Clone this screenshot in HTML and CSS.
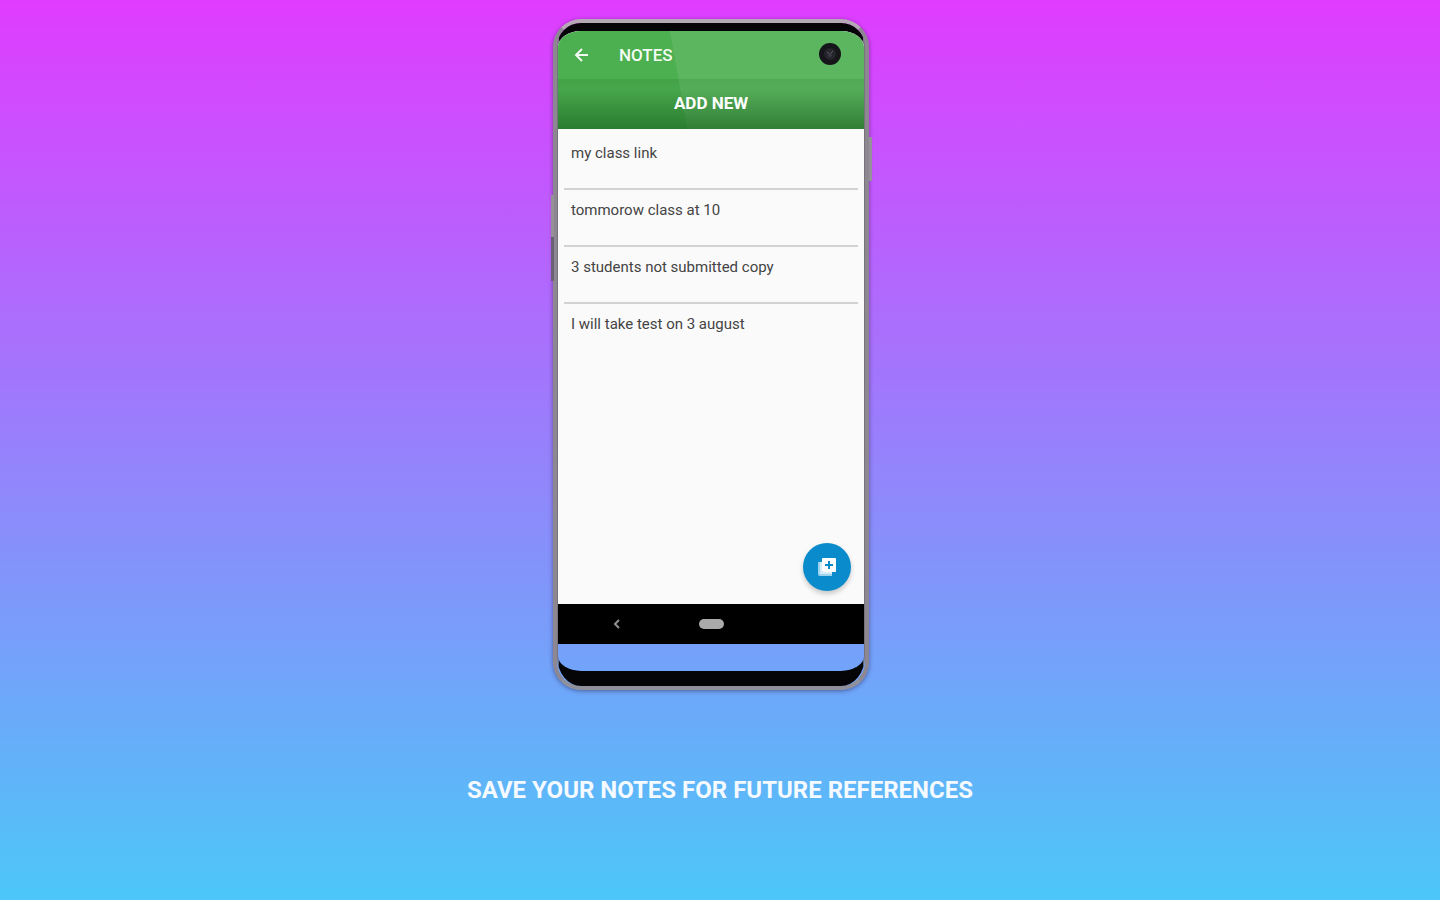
FILE: index.html
```
<!DOCTYPE html>
<html lang="en">
<head>
    <meta charset="UTF-8">
    <meta name="viewport" content="width=device-width, initial-scale=1.0">
    <title>Notes</title>
    <link rel="stylesheet" href="styles.css">
</head>
<body>
    <main class="promo">
        <div class="phone">
            <span class="side-key key-power"></span>
            <span class="side-key key-volume"></span>
            <span class="side-key key-assist"></span>
            <div class="bezel">
                <!-- App -->
                <div class="app">
                    <header class="app-header">
                        <div class="app-bar">
                            <button type="button" class="back-button" aria-label="Back">
                                <svg width="16" height="16" viewBox="0 0 16 16" fill="none" stroke="#f0faf0" stroke-width="2">
                                    <path d="M14 8H2M8 2L2 8l6 6"/>
                                </svg>
                            </button>
                            <h1>NOTES</h1>
                            <svg class="camera" width="24" height="26" viewBox="0 0 24 26">
                                <circle cx="12" cy="12" r="11" fill="#15151a"/>
                                <circle cx="12" cy="12" r="6" fill="#25252b"/>
                                <path d="M9 10l3 2 3-3" fill="none" stroke="#5c5c66" stroke-width="1"/>
                                <circle cx="12" cy="13" r="2" fill="#3b3b45"/>
                            </svg>
                        </div>
                        <button type="button" class="add-button">ADD NEW</button>
                    </header>
                    <ul class="note-list">
                        <li>my class link</li>
                        <li>tommorow class at 10</li>
                        <li>3 students not submitted copy</li>
                        <li>I will take test on 3 august</li>
                    </ul>
                    <button type="button" class="fab" aria-label="Add note">
                        <svg width="20" height="20" viewBox="0 0 20 20">
                            <path d="M1 5v12a2 2 0 0 0 2 2h12v-2H3V5z" fill="#9fd2ec"/>
                            <path d="M3 5v12h12v-2H5V5z" fill="#d5edf8"/>
                            <rect x="5" y="1" width="14" height="14" rx="1" fill="#fff"/>
                            <path d="M12 4v8M8 8h8" stroke="#0a8bcb" stroke-width="2"/>
                        </svg>
                    </button>
                </div>
                <!-- System navigation -->
                <nav class="nav-bar">
                    <button type="button" class="nav-back" aria-label="System back">
                        <svg width="8" height="10" viewBox="0 0 8 10" fill="none" stroke="#909090" stroke-width="2">
                            <path d="M6 1L2 5l4 4"/>
                        </svg>
                    </button>
                    <button type="button" class="nav-home" aria-label="Home"></button>
                </nav>
            </div>
        </div>
        <h2 class="caption">SAVE YOUR NOTES FOR FUTURE REFERENCES</h2>
    </main>
</body>
</html>
```
FILE: styles.css
```
* {
    margin: 0;
    padding: 0;
    box-sizing: border-box;
}

body {
    font-family: Roboto, Arial, sans-serif;
    min-height: 100vh;
    background: linear-gradient(#e03cff, #4cc7f8);
}

button {
    border: none;
    background: none;
    font-family: inherit;
    cursor: pointer;
}

.promo {
    display: flex;
    flex-direction: column;
    align-items: center;
    padding: 19px 0 40px;
}

.phone {
    position: relative;
    width: 316px;
    margin-right: 18px;
    border: 4px solid;
    border-color: #b5a9b5 #8c8790 #8f9099 #8c8790;
    border-radius: 28px;
    box-shadow: 0 1px 4px rgba(40, 20, 60, 0.5);
}

.side-key {
    position: absolute;
    width: 3px;
    background-color: #96909b;
}

.key-power {
    top: 114px;
    right: -7px;
    height: 44px;
}

.key-volume {
    top: 172px;
    left: -6px;
    height: 42px;
}

.key-assist {
    top: 214px;
    left: -6px;
    height: 44px;
    background-color: #6c6076;
}

.bezel {
    display: flex;
    flex-direction: column;
    min-height: 663px;
    border: solid #050507;
    border-width: 8px 1px 15px;
    border-left-color: #77737a;
    border-right-color: #77737a;
    border-radius: 24px 24px 24px 24px / 24px 24px 30px 30px;
    overflow: hidden;
}

.app {
    position: relative;
    display: flex;
    flex-direction: column;
    min-height: 573px;
    background-color: #fafafa;
}

/* light reflection running across the header */
.app-header {
    background: linear-gradient(80deg, transparent 40%, rgba(255, 255, 255, 0.09) 40%), #4caf50;
}

.app-bar {
    display: flex;
    align-items: center;
    height: 48px;
    padding: 0 22px 0 16px;
}

.back-button {
    display: flex;
    width: 16px;
    height: 16px;
}

.app-bar h1 {
    flex: 1;
    margin-left: 29px;
    font-size: 17px;
    font-weight: 500;
    line-height: 24px;
    color: #f4fcf4;
}

.add-button {
    display: block;
    width: 100%;
    height: 50px;
    padding-bottom: 2px;
    background: linear-gradient(rgba(20, 90, 25, 0.15), rgba(20, 90, 25, 0.1) 20%, rgba(20, 90, 25, 0.6));
    font-size: 17px;
    font-weight: 700;
    color: #fff;
}

.note-list {
    list-style: none;
    padding: 4px 6px;
}

.note-list li {
    height: 57px;
    padding: 10px 7px;
    border-bottom: 2px solid #d2d2d2;
    font-size: 15px;
    line-height: 20px;
    color: #444;
}

.note-list li:last-child {
    border-bottom: none;
}

.fab {
    position: absolute;
    right: 13px;
    bottom: 13px;
    display: flex;
    align-items: center;
    justify-content: center;
    width: 48px;
    height: 48px;
    border-radius: 50%;
    background-color: #0a8bcb;
    box-shadow: 0 3px 5px rgba(0, 0, 0, 0.2);
}

.nav-bar {
    display: grid;
    grid-template-columns: 1fr 72px 1fr;
    align-items: center;
    justify-items: center;
    height: 40px;
    background-color: #000;
}

.nav-back {
    display: flex;
}

.nav-home {
    width: 25px;
    height: 10px;
    border-radius: 5px;
    background-color: #aaa;
}

.caption {
    margin-top: 84px;
    font-size: 24px;
    font-weight: 700;
    line-height: 32px;
    text-align: center;
    color: #f4faff;
}
```
